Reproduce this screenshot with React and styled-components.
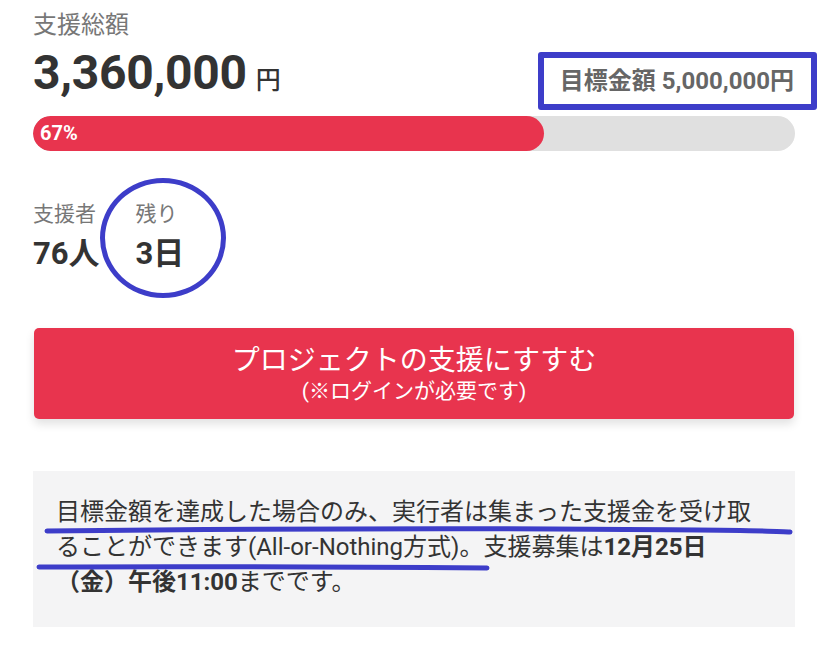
import React from "react";
import styled, { createGlobalStyle } from "styled-components";

const GlobalStyle = createGlobalStyle`
  body {
    margin: 0;
    background: #fff;
    font-family: "Roboto", "Noto Sans CJK JP", sans-serif;
    color: #333;
  }
`;

const ink = "#3d3dc9";

const Page = styled.div`
  width: 762px;
  padding: 10px 33px 0;
`;

const Label = styled.div`
  font-size: ${(p) => p.size || 24}px;
  line-height: 1.3;
  color: #777;
`;

const TotalRow = styled.div`
  display: flex;
  justify-content: space-between;
  align-items: center;
  margin-top: 2px;
`;

const Amount = styled.div`
  font-size: 48px;
  font-weight: 700;
  line-height: 60px;
  color: #333;
  letter-spacing: -0.3px;
`;

const Unit = styled.span`
  font-size: 25px;
  font-weight: 500;
  margin-left: 9px;
`;

const Goal = styled.div`
  border: 6px solid ${ink};
  border-radius: 3px;
  padding: 6px 17px 6px 16px;
  margin: 8px -22px 0 0;
  font-size: 24px;
  font-weight: 700;
  color: #666;
  line-height: 34px;
`;

const Track = styled.div`
  margin-top: 5px;
  height: 35px;
  border-radius: 18px;
  background: #e0e0e0;
  overflow: hidden;
`;

const Fill = styled.div`
  height: 100%;
  border-radius: 18px;
  background: #e8344e;
  color: #fff;
  font-size: 20px;
  font-weight: 700;
  line-height: 35px;
  padding-left: 7px;
  box-sizing: border-box;
`;

const Stats = styled.div`
  display: flex;
  gap: 36px;
  margin-top: 50px;
`;

const Stat = styled.div`
  position: relative;
`;

const StatValue = styled.div`
  font-size: 31px;
  font-weight: 700;
  line-height: 40px;
  margin-top: 6px;
  color: #333;
`;

const Ring = styled.div`
  position: absolute;
  left: -36px;
  top: -23px;
  width: 116px;
  height: 110px;
  border: 5px solid ${ink};
  border-radius: 50%;
  pointer-events: none;
`;

const Button = styled.button`
  display: flex;
  flex-direction: column;
  align-items: center;
  justify-content: center;
  width: 760px;
  height: 91px;
  margin: 54px 0 0 1px;
  border: none;
  border-radius: 5px;
  background: #e8344e;
  color: #fff;
  font-family: inherit;
  box-shadow: 0 5px 10px rgba(0, 0, 0, 0.12);
`;

const ButtonMain = styled.span`
  font-size: 28px;
  line-height: 34px;
`;

const ButtonSub = styled.span`
  font-size: 21px;
  line-height: 26px;
`;

const Info = styled.div`
  position: relative;
  margin-top: 52px;
  background: #f4f4f5;
  padding: 24px 23px 27px;
  font-size: 24px;
  line-height: 35px;
  color: #333;
`;

const Strong = styled.b`
  font-weight: 700;
  white-space: ${(p) => (p.keep ? "nowrap" : "normal")};
`;

const Marks = styled.svg`
  position: absolute;
  left: 0;
  top: 0;
  pointer-events: none;
`;

export default function App() {
  return (
    <>
      <GlobalStyle />
      <Page>
        <Label>支援総額</Label>
        <TotalRow>
          <Amount>
            3,360,000<Unit>円</Unit>
          </Amount>
          <Goal>目標金額 5,000,000円</Goal>
        </TotalRow>
        <Track>
          <Fill style={{ width: "67%" }}>67%</Fill>
        </Track>
        <Stats>
          <Stat>
            <Label size={21}>支援者</Label>
            <StatValue>76人</StatValue>
          </Stat>
          <Stat>
            <Ring />
            <Label size={21}>残り</Label>
            <StatValue>3日</StatValue>
          </Stat>
        </Stats>
        <Button>
          <ButtonMain>プロジェクトの支援にすすむ</ButtonMain>
          <ButtonSub>(※ログインが必要です)</ButtonSub>
        </Button>
        <Info>
          目標金額を達成した場合のみ、実行者は集まった支援金を受け取ることができます(All-or-Nothing方式)。支援募集は
          <Strong>12月25日</Strong>
          <Strong keep>（金）午後11:00</Strong>までです。
          <Marks width="762" height="154">
            <path d="M14 60 Q300 57 520 58 T757 61" stroke={ink} strokeWidth="5" strokeLinecap="round" fill="none" />
            <path d="M6 96 Q200 95 454 97" stroke={ink} strokeWidth="5" strokeLinecap="round" fill="none" />
          </Marks>
        </Info>
      </Page>
    </>
  );
}
